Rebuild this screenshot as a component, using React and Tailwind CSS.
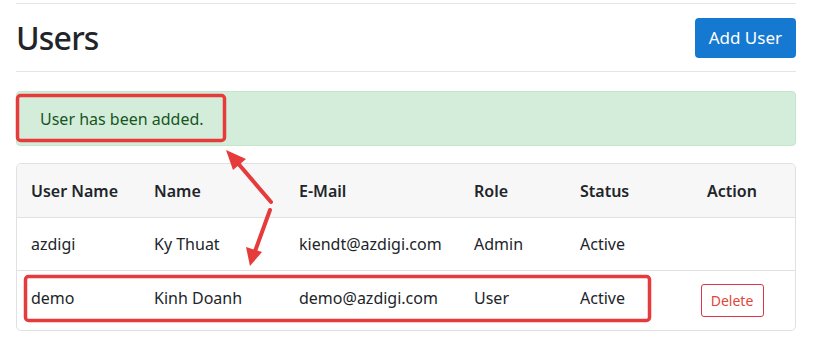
import React from "react"

const users = [
  { username: "azdigi", name: "Ky Thuat", email: "kiendt@azdigi.com", role: "Admin", status: "Active", canDelete: false },
  { username: "demo", name: "Kinh Doanh", email: "demo@azdigi.com", role: "User", status: "Active", canDelete: true },
]

export default function App() {
  return (
    <div className="relative w-[814px] h-[344px] bg-white overflow-hidden text-[#212529]" style={{ fontFamily: '"Noto Sans", "Open Sans", sans-serif' }}>
      <div className="ml-[16px] w-[780px] pt-[3px]">
        {/* Header */}
        <div className="border-t border-b border-[#e5e5e5] h-[69px] flex items-center justify-between">
          <h1 className="text-[32px] leading-none font-medium tracking-[-0.8px] mt-[1px]">Users</h1>
          <button className="h-[40px] px-[14px] bg-[#1679d1] text-white text-[17px] rounded-[4px]">Add User</button>
        </div>

        {/* Alert */}
        <div className="mt-[19px] h-[55px] bg-[#d4edda] border border-[#c3e6cb] rounded-[4px] flex items-center pl-[23px] text-[#155724] text-[16px]">
          User has been added.
        </div>

        {/* Table */}
        <div className="mt-[17px] border border-[#e1e1e1] rounded-[5px] overflow-hidden">
          <table className="w-full table-fixed border-collapse text-[16px]">
            <colgroup>
              <col className="w-[122px]" />
              <col className="w-[145px]" />
              <col className="w-[175px]" />
              <col className="w-[106px]" />
              <col className="w-[104px]" />
              <col />
            </colgroup>
            <thead>
              <tr className="bg-[#f7f7f7] h-[53px] border-b border-[#e1e1e1]">
                <th className="text-left font-semibold pl-[14px] pt-[2px]">User Name</th>
                <th className="text-left font-semibold pl-[15px] pt-[2px]">Name</th>
                <th className="text-left font-semibold pl-[15px] pt-[2px]">E-Mail</th>
                <th className="text-left font-semibold pl-[15px] pt-[2px]">Role</th>
                <th className="text-left font-semibold pl-[15px] pt-[2px]">Status</th>
                <th className="text-center font-semibold pt-[2px]">Action</th>
              </tr>
            </thead>
            <tbody>
              {users.map((u, i) => {
                const cell = i === 0 ? "" : "pb-[4px]"
                return (
                  <tr key={u.username} className={i === 0 ? "h-[53px] border-b border-[#e1e1e1]" : "h-[60px]"}>
                    <td className={`pl-[14px] ${cell}`}>{u.username}</td>
                    <td className={`pl-[15px] ${cell}`}>{u.name}</td>
                    <td className={`pl-[15px] ${cell}`}>{u.email}</td>
                    <td className={`pl-[15px] ${cell}`}>{u.role}</td>
                    <td className={`pl-[15px] ${cell}`}>{u.status}</td>
                    <td className="text-center">
                      {u.canDelete && (
                        <button className="h-[33px] w-[63px] border border-[#dc3545] text-[#e0463a] rounded-[3px] text-[14px]">Delete</button>
                      )}
                    </td>
                  </tr>
                )
              })}
            </tbody>
          </table>
        </div>
      </div>

      {/* Annotations */}
      <svg className="absolute inset-0 pointer-events-none" width="814" height="344" viewBox="0 0 814 344">
        <rect x="17.5" y="95.5" width="207" height="45" rx="3" fill="none" stroke="#e63b3b" strokeWidth="3.5" />
        <rect x="25.5" y="276.5" width="624" height="44" rx="3" fill="none" stroke="#e63b3b" strokeWidth="3.5" />
        <line x1="271" y1="202" x2="236" y2="161" stroke="#e63b3b" strokeWidth="4" strokeLinecap="round" />
        <polygon points="226,150 246,159 233,170" fill="#e63b3b" />
        <line x1="270" y1="210" x2="254" y2="254" stroke="#e63b3b" strokeWidth="4" strokeLinecap="round" />
        <polygon points="250,266 246,247 262,252" fill="#e63b3b" />
      </svg>
    </div>
  )
}
